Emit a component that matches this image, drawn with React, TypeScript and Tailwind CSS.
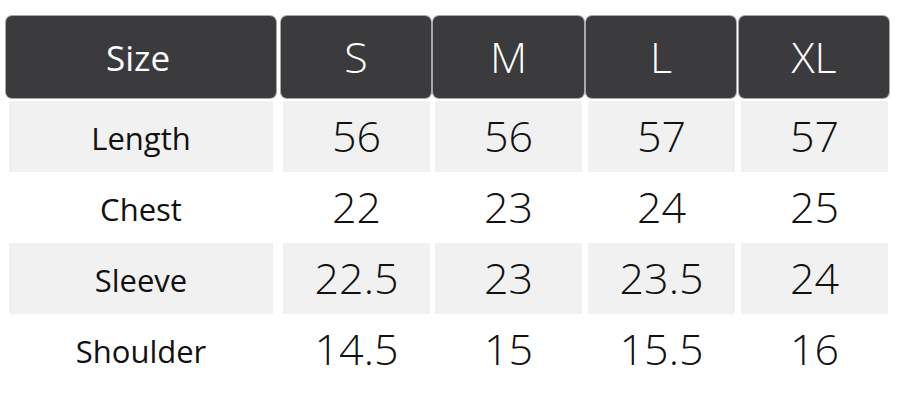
import React from "react";

const headers = ["S", "M", "L", "XL"];
const rows: { label: string; values: string[] }[] = [
  { label: "Length", values: ["56", "56", "57", "57"] },
  { label: "Chest", values: ["22", "23", "24", "25"] },
  { label: "Sleeve", values: ["22.5", "23", "23.5", "24"] },
  { label: "Shoulder", values: ["14.5", "15", "15.5", "16"] },
];

const headW = ["w-[150px]", "w-[151px]", "w-[150px]", "w-[150px]"];
const headGap = ["ml-[5px]", "ml-[2px]", "ml-[2px]", "ml-[3px]"];
const bodyGap = ["ml-[10px]", "ml-[5px]", "ml-[6px]", "ml-[6px]"];

export default function App() {
  return (
    <div
      className="w-[900px] h-[400px] bg-white overflow-hidden"
      style={{ fontFamily: '"Open Sans", "Noto Sans", sans-serif' }}
    >
      <div className="pt-[16px] pl-[6px]">
        <div className="flex h-[82px]">
          <div className="w-[270px] h-full rounded-[6px] bg-[#3b3b3d] shadow-[0_0_0_1px_#a8a8a8] flex items-center justify-center text-white text-[35px] pr-[6px] pt-[3px]">
            Size
          </div>
          {headers.map((h, i) => (
            <div
              key={h}
              className={`${headW[i]} ${headGap[i]} h-full rounded-[6px] bg-[#3b3b3d] shadow-[0_0_0_1px_#a8a8a8] flex items-center justify-center text-white text-[43px] font-light pt-[1px]`}
            >
              {h}
            </div>
          ))}
        </div>
        <div className="mt-[3px] pl-[3px] flex flex-col">
          {rows.map((r, ri) => (
            <div key={r.label} className="flex h-[71px]">
              <div
                className={`w-[264px] h-full flex items-center justify-center text-[#111] text-[31px] pt-[4px] ${
                  ri % 2 === 0 ? "bg-[#f1f1f1]" : "bg-white"
                }`}
              >
                {r.label}
              </div>
              {r.values.map((v, i) => (
                <div
                  key={i}
                  className={`w-[147px] ${bodyGap[i]} h-full flex items-center justify-center text-[#111] text-[43px] font-light ${
                    ri % 2 === 0 ? "bg-[#f1f1f1]" : "bg-white"
                  }`}
                >
                  {v}
                </div>
              ))}
            </div>
          ))}
        </div>
      </div>
    </div>
  );
}
